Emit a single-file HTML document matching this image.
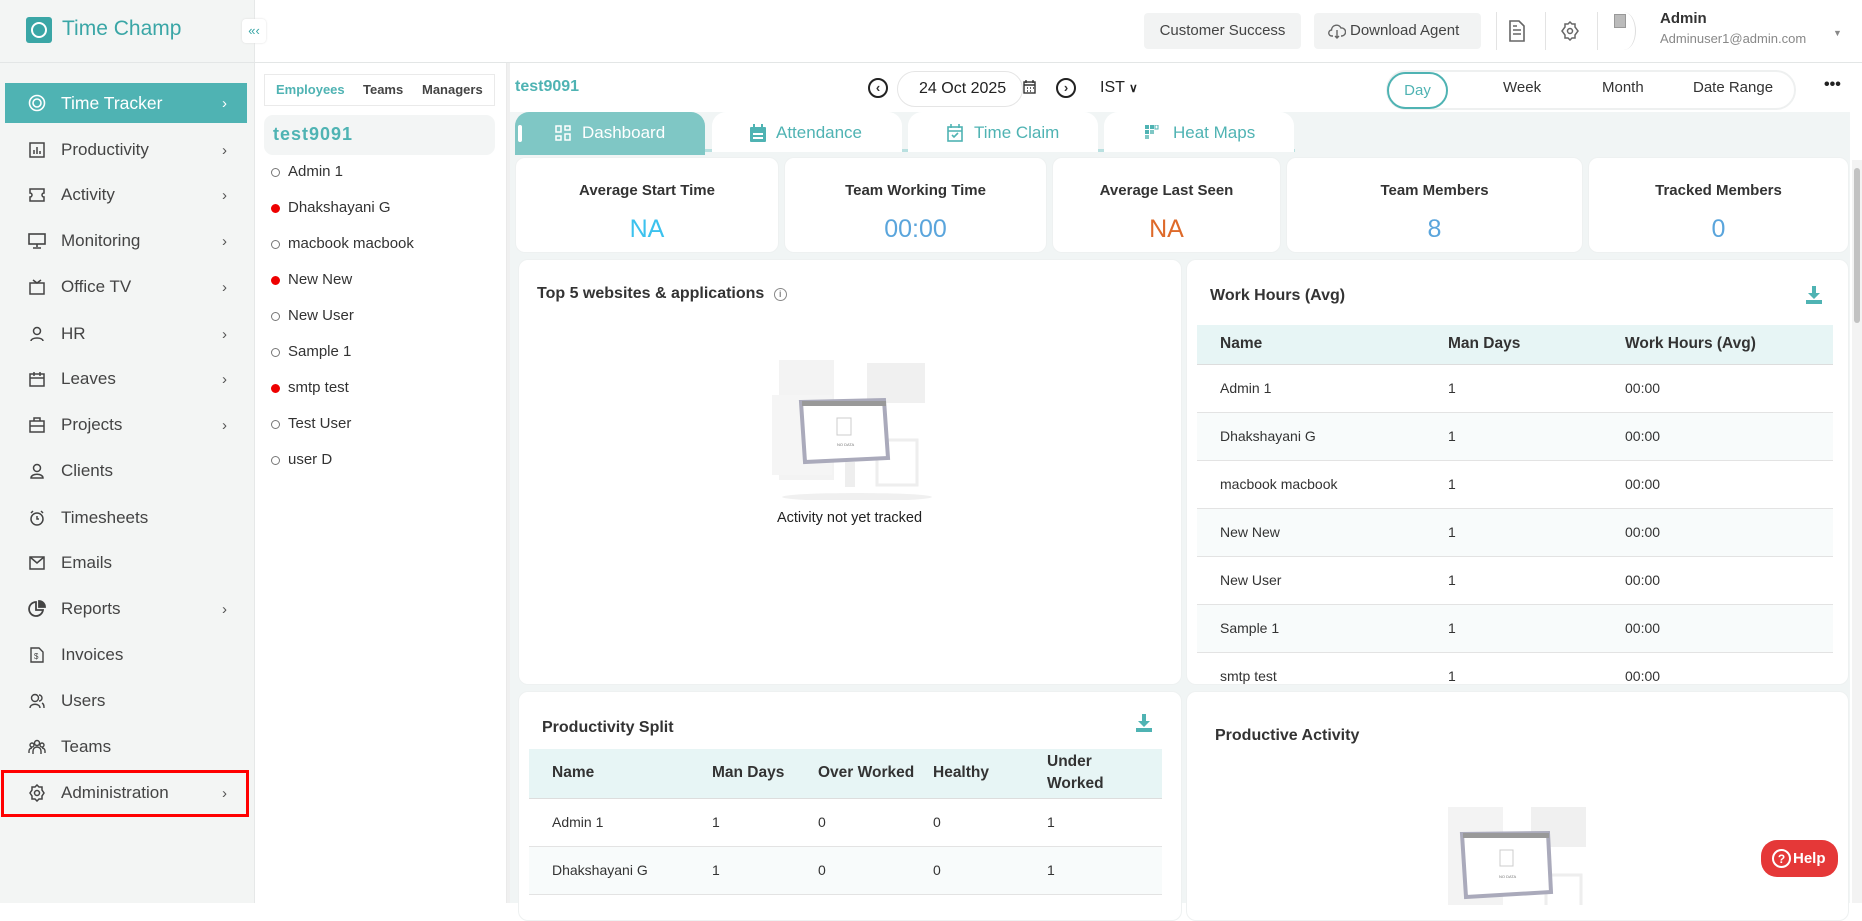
<!DOCTYPE html>
<html><head><meta charset="utf-8"><style>
*{box-sizing:border-box;margin:0;padding:0}
body{width:1862px;height:903px;overflow:hidden;font-family:"Liberation Sans",sans-serif;color:#333;background:#fff;position:relative}
.a{position:absolute}
.side{left:0;top:0;width:255px;height:903px;background:#f3f5f4;border-right:1px solid #e6e8e8}
.mi{position:absolute;left:5px;width:242px;height:46px;display:flex;align-items:center;font-size:17px;color:#444}
.mi .ic{width:20px;height:20px;margin-left:22px;margin-right:14px;display:flex;align-items:center;justify-content:center}
.mi .ch{position:absolute;right:20px;font-size:15px;color:#555}
.emp{font-size:15px;color:#333;left:288px}
.dot{position:absolute;width:9px;height:9px;border-radius:50%;left:-17px;top:5px;border:1px solid #777}
.dot.r{background:#e00;border-color:#e00}
.card{background:#fff;border-radius:10px;border:1px solid #eef1f1}
.st{text-align:center}
.st .t{font-size:15px;font-weight:bold;color:#333;margin-top:24px}
.st .v{font-size:25px;margin-top:16px}
table{border-collapse:collapse}
td,th{text-align:left;font-size:14px;color:#333}
th{font-size:15.5px;font-weight:bold}
</style></head><body>

<!-- sidebar -->
<div class="a side"></div>
<div class="a" style="left:26px;top:17px;width:26px;height:26px;background:#3aa6a6;border-radius:3px"><div style="position:absolute;left:5px;top:5px;width:16px;height:16px;border:2px solid #fff;border-radius:50%"></div></div>
<div class="a" style="left:62px;top:17px;font-size:21px;color:#3aa6a6">Time Champ</div>
<div class="a" style="left:242px;top:19px;width:24px;height:24px;background:#fff;border-radius:4px;color:#3aa6a6;font-size:13px;text-align:center;line-height:24px;box-shadow:0 0 2px #ddd">«‹</div>
<div class="a" style="left:0;top:62px;width:1862px;height:1px;background:#e3e6e6"></div>

<div class="mi" style="top:83px;height:40px;background:#4fb3b3;color:#fff;font-size:17.5px"><div class="ic"><svg width="18" height="18" viewBox="0 0 18 18" fill="none" stroke="#fff" stroke-width="1.6"><circle cx="9" cy="9" r="7.5"/><circle cx="9" cy="9" r="4"/></svg></div>Time Tracker<span class="ch" style="color:#fff">›</span></div>
<div class="mi" style="top:127px"><div class="ic"><svg width="16" height="16" fill="none" stroke="#444" stroke-width="1.5"><rect x="1" y="1" width="14" height="14"/><path d="M5 12V8M8 12V5M11 12V9"/></svg></div>Productivity<span class="ch">›</span></div>
<div class="mi" style="top:172px"><div class="ic"><svg width="16" height="16" fill="none" stroke="#444" stroke-width="1.5"><path d="M1 2h14v4a2 2 0 000 4v4H1v-4a2 2 0 000-4z"/></svg></div>Activity<span class="ch">›</span></div>
<div class="mi" style="top:218px"><div class="ic"><svg width="18" height="16" fill="none" stroke="#444" stroke-width="1.6"><rect x="1" y="1" width="16" height="10"/><path d="M9 11v3M5 15h8"/></svg></div>Monitoring<span class="ch">›</span></div>
<div class="mi" style="top:264px"><div class="ic"><svg width="16" height="16" fill="none" stroke="#444" stroke-width="1.5"><rect x="1" y="4" width="14" height="11"/><path d="M4 1l4 3 4-3"/></svg></div>Office TV<span class="ch">›</span></div>
<div class="mi" style="top:311px"><div class="ic"><svg width="16" height="16" fill="none" stroke="#444" stroke-width="1.5"><circle cx="8" cy="5" r="3.5"/><path d="M2 15c0-4 12-4 12 0"/></svg></div>HR<span class="ch">›</span></div>
<div class="mi" style="top:356px"><div class="ic"><svg width="16" height="16" fill="none" stroke="#444" stroke-width="1.5"><rect x="1" y="3" width="14" height="12"/><path d="M1 7h14M5 1v4M11 1v4"/></svg></div>Leaves<span class="ch">›</span></div>
<div class="mi" style="top:402px"><div class="ic"><svg width="16" height="16" fill="none" stroke="#444" stroke-width="1.5"><rect x="1" y="4" width="14" height="11"/><path d="M5 4V1h6v3M1 9h14"/></svg></div>Projects<span class="ch">›</span></div>
<div class="mi" style="top:448px"><div class="ic"><svg width="14" height="16" fill="none" stroke="#444" stroke-width="1.5"><circle cx="7" cy="5" r="3.5"/><path d="M1 15c0-5 12-5 12 0z"/></svg></div>Clients</div>
<div class="mi" style="top:495px"><div class="ic"><svg width="16" height="16" fill="none" stroke="#444" stroke-width="1.5"><circle cx="8" cy="9" r="6"/><path d="M8 6v3h2M2 3l2-2M14 3l-2-2"/></svg></div>Timesheets</div>
<div class="mi" style="top:540px"><div class="ic"><svg width="16" height="14" fill="none" stroke="#444" stroke-width="1.5"><rect x="1" y="1" width="14" height="12"/><path d="M1 1l7 6 7-6"/></svg></div>Emails</div>
<div class="mi" style="top:586px"><div class="ic"><svg width="18" height="18" fill="none" stroke="#444" stroke-width="1.8"><path d="M8 2a7 7 0 107 8H8z"/><path d="M11 1v6h6a6 6 0 00-6-6z" fill="#444"/></svg></div>Reports<span class="ch">›</span></div>
<div class="mi" style="top:632px"><div class="ic"><svg width="14" height="16" fill="none" stroke="#444" stroke-width="1.4"><path d="M1 1h8l4 4v10H1z"/><text x="4" y="12" font-size="8" fill="#444" stroke="none">$</text></svg></div>Invoices</div>
<div class="mi" style="top:678px"><div class="ic"><svg width="16" height="16" fill="none" stroke="#444" stroke-width="1.4"><circle cx="6" cy="5" r="3.5"/><path d="M1 15c0-5 10-5 10 0M10 2a3 3 0 010 6M13 10c2 1 2 3 2 5"/></svg></div>Users</div>
<div class="mi" style="top:724px"><div class="ic"><svg width="18" height="16" fill="none" stroke="#444" stroke-width="1.4"><circle cx="9" cy="4" r="2.5"/><circle cx="4" cy="6" r="2"/><circle cx="14" cy="6" r="2"/><path d="M5 15v-3a4 4 0 018 0v3M1 14v-2a3 3 0 013-3M17 14v-2a3 3 0 00-3-3"/></svg></div>Teams</div>
<div class="mi" style="top:770px"><div class="ic"><svg width="18" height="18" fill="none" stroke="#444" stroke-width="1.5"><path d="M9 1l2 2h3v3l2 3-2 3v3h-3l-2 2-2-2H4v-3L2 9l2-3V3h3z"/><circle cx="9" cy="9" r="2.5"/></svg></div>Administration<span class="ch">›</span></div>
<div class="a" style="left:1px;top:770px;width:248px;height:47px;border:3px solid #f00"></div>

<!-- header -->
<div class="a" style="left:1144px;top:13px;width:157px;height:36px;background:#f2f3f3;border-radius:4px;font-size:15px;line-height:36px;text-align:center;color:#444">Customer Success</div>
<div class="a" style="left:1314px;top:13px;width:167px;height:36px;background:#f2f3f3;border-radius:4px;font-size:15px;line-height:36px;color:#444;padding-left:36px">Download Agent</div>
<svg class="a" style="left:1328px;top:22px" width="18" height="18" fill="none" stroke="#666" stroke-width="1.4"><path d="M5 14H4a3 3 0 01-.5-6A5 5 0 0113 6a3 3 0 011 8h-1M9 8v8M7 14l2 2 2-2"/></svg>
<div class="a" style="left:1496px;top:12px;width:1px;height:38px;background:#e3e3e3"></div>
<svg class="a" style="left:1509px;top:20px" width="16" height="22" fill="none" stroke="#666" stroke-width="1.6"><path d="M1 1h9l5 5v15H1z M4 10h8M4 14h8M4 6h4"/></svg>
<div class="a" style="left:1545px;top:12px;width:1px;height:38px;background:#e3e3e3"></div>
<svg class="a" style="left:1560px;top:21px" width="20" height="20" fill="none" stroke="#666" stroke-width="1.5"><path d="M10 1l2 2h3v3l3 4-3 4v3h-3l-2 2-2-2H5v-3l-3-4 3-4V3h3z"/><circle cx="10" cy="10" r="2.5"/></svg>
<div class="a" style="left:1597px;top:12px;width:1px;height:38px;background:#e3e3e3"></div>
<div class="a" style="left:1612px;top:12px;width:24px;height:38px;border-radius:50%;border-right:1px solid #ddd"></div>
<div class="a" style="left:1614px;top:14px;width:12px;height:14px;background:#bbb;border:1px solid #999"></div>
<div class="a" style="left:1660px;top:10px;font-size:15px;font-weight:bold;color:#333">Admin</div>
<div class="a" style="left:1660px;top:31px;font-size:13px;color:#888">Adminuser1@admin.com</div>
<div class="a" style="left:1833px;top:28px;font-size:9px;color:#888">▼</div>

<!-- employee panel -->
<div class="a" style="left:255px;top:63px;width:252px;height:840px;background:#fff;border-right:1px solid #eaeaea"></div>
<div class="a" style="left:264px;top:74px;width:231px;height:32px;border:1px solid #eaeaea;font-size:13px;font-weight:bold;line-height:30px">
<span class="a" style="left:11px;color:#4fb3b3">Employees</span><span class="a" style="left:98px;color:#444">Teams</span><span class="a" style="left:157px;color:#444">Managers</span></div>
<div class="a" style="left:264px;top:115px;width:231px;height:40px;background:#f3f5f5;border-radius:9px;font-size:18px;font-weight:bold;color:#4fb3b3;letter-spacing:1px;padding:9px 0 0 9px">test9091</div>
<div class="a emp" style="top:163px"><span class="dot"></span>Admin 1</div>
<div class="a emp" style="top:199px"><span class="dot r"></span>Dhakshayani G</div>
<div class="a emp" style="top:235px"><span class="dot"></span>macbook macbook</div>
<div class="a emp" style="top:271px"><span class="dot r"></span>New New</div>
<div class="a emp" style="top:307px"><span class="dot"></span>New User</div>
<div class="a emp" style="top:343px"><span class="dot"></span>Sample 1</div>
<div class="a emp" style="top:379px"><span class="dot r"></span>smtp test</div>
<div class="a emp" style="top:415px"><span class="dot"></span>Test User</div>
<div class="a emp" style="top:451px"><span class="dot"></span>user D</div>

<!-- main top bar -->
<div class="a" style="left:515px;top:78px;font-size:16px;font-weight:bold;color:#4fb3b3">test9091</div>
<div class="a" style="left:868px;top:78px;width:20px;height:20px;border:2px solid #222;border-radius:50%;font-size:13px;line-height:15px;text-align:center;font-weight:bold">‹</div>
<div class="a" style="left:897px;top:71px;width:126px;height:36px;border:1px solid #e5e5e5;border-radius:18px;font-size:16px;line-height:34px;padding-left:21px;color:#222">24 Oct 2025</div>
<svg class="a" style="left:1023px;top:80px" width="13" height="14" fill="none" stroke="#333" stroke-width="1.4"><rect x="1" y="2" width="11" height="11"/><path d="M1 5h11M4 8h1M7 8h1M10 8h1M4 11h1M7 11h1M3 0v3M10 0v3"/></svg>
<div class="a" style="left:1056px;top:78px;width:20px;height:20px;border:2px solid #222;border-radius:50%;font-size:13px;line-height:15px;text-align:center;font-weight:bold">›</div>
<div class="a" style="left:1100px;top:79px;font-size:16px;color:#222">IST <b style="font-size:12px">∨</b></div>
<div class="a" style="left:1386px;top:70px;width:410px;height:40px;border:2px solid #eef0f0;border-radius:20px"></div>
<div class="a" style="left:1387px;top:72px;height:37px;border:2px solid #4fb3b3;border-radius:19px;width:61px"></div>
<div class="a" style="left:1387px;top:72px;height:37px;font-size:15px;color:#4fb3b3;line-height:37px;text-align:center;width:61px">Day</div>
<div class="a" style="left:1503px;top:79px;font-size:15px;color:#333">Week</div>
<div class="a" style="left:1602px;top:79px;font-size:15px;color:#333">Month</div>
<div class="a" style="left:1693px;top:79px;font-size:15px;color:#333">Date Range</div>
<div class="a" style="left:1824px;top:76px;font-size:16px;font-weight:bold;color:#222">•••</div>

<!-- content bg -->
<div class="a" style="left:510px;top:112px;width:1340px;height:791px;background:#f1f5f5"></div>
<div class="a" style="left:1852px;top:160px;width:10px;height:743px;background:#f3f3f3"></div>
<div class="a" style="left:1854px;top:168px;width:6px;height:155px;background:#c2c2c2;border-radius:3px"></div>

<!-- tabs -->
<div class="a" style="left:515px;top:112px;width:780px;height:40px;border-bottom:3px solid #b9e0e0"></div>
<div class="a" style="left:515px;top:112px;width:190px;height:43px;background:#7fc7c5;border-radius:14px 14px 0 0;color:#fff;font-size:17px;line-height:42px;padding-left:67px">Dashboard</div>
<div class="a" style="left:518px;top:125px;width:4px;height:17px;background:#fff;border-radius:2px"></div>
<svg class="a" style="left:555px;top:125px" width="16" height="17" fill="none" stroke="#fff" stroke-width="1.5"><rect x="1" y="1" width="5" height="6"/><rect x="10" y="1" width="5" height="4"/><rect x="1" y="11" width="5" height="4"/><rect x="10" y="9" width="5" height="6"/></svg>
<div class="a" style="left:712px;top:112px;width:190px;height:40px;background:#fff;border-radius:14px 14px 0 0;color:#4fb3b3;font-size:17px;line-height:42px;padding-left:64px">Attendance</div>
<svg class="a" style="left:750px;top:124px" width="16" height="18" fill="#4fb3b3"><rect x="0" y="3" width="16" height="15" rx="1"/><rect x="3" y="0" width="2" height="4"/><rect x="11" y="0" width="2" height="4"/><rect x="3" y="9" width="10" height="2" fill="#fff"/><rect x="3" y="13" width="10" height="2" fill="#fff"/></svg>
<div class="a" style="left:908px;top:112px;width:190px;height:40px;background:#fff;border-radius:14px 14px 0 0;color:#4fb3b3;font-size:17px;line-height:42px;padding-left:66px">Time Claim</div>
<svg class="a" style="left:947px;top:124px" width="16" height="18" fill="none" stroke="#4fb3b3" stroke-width="1.6"><rect x="1" y="3" width="14" height="14"/><path d="M1 7h14M4 0v4M12 0v4M5 11l2 2 4-4"/></svg>
<div class="a" style="left:1104px;top:112px;width:190px;height:40px;background:#fff;border-radius:14px 14px 0 0;color:#4fb3b3;font-size:17px;line-height:42px;padding-left:69px">Heat Maps</div>
<svg class="a" style="left:1145px;top:125px" width="14" height="17"><rect x="0" y="0" width="4" height="4" fill="#4fb3b3"/><rect x="5" y="0" width="4" height="4" fill="#4fb3b3"/><rect x="10" y="0" width="3" height="4" fill="none" stroke="#4fb3b3"/><rect x="0" y="5" width="4" height="4" fill="#4fb3b3"/><rect x="5" y="5" width="4" height="4" fill="#7fc7c5"/><rect x="0" y="10" width="4" height="4" fill="#7fc7c5"/></svg>

<!-- stat cards -->
<div class="a card st" style="left:515px;top:157px;width:264px;height:96px"><div class="t">Average Start Time</div><div class="v" style="color:#3cc2ee">NA</div></div>
<div class="a card st" style="left:784px;top:157px;width:263px;height:96px"><div class="t">Team Working Time</div><div class="v" style="color:#5aa5dc">00:00</div></div>
<div class="a card st" style="left:1052px;top:157px;width:229px;height:96px"><div class="t">Average Last Seen</div><div class="v" style="color:#de6a2a">NA</div></div>
<div class="a card st" style="left:1286px;top:157px;width:297px;height:96px"><div class="t">Team Members</div><div class="v" style="color:#5aa5dc">8</div></div>
<div class="a card st" style="left:1588px;top:157px;width:261px;height:96px"><div class="t">Tracked Members</div><div class="v" style="color:#5aa5dc">0</div></div>

<!-- top5 -->
<div class="a card" style="left:518px;top:259px;width:664px;height:426px"></div>
<div class="a" style="left:537px;top:285px;font-size:16px;font-weight:bold;color:#333">Top 5 websites &amp; applications <span style="display:inline-block;width:13px;height:13px;border:1px solid #888;border-radius:50%;font-size:9px;color:#888;text-align:center;line-height:11px;vertical-align:1px;margin-left:5px">i</span></div>
<svg class="a" style="left:767px;top:350px" width="180" height="150">
<rect x="12" y="10" width="55" height="120" fill="#f3f3f3"/><rect x="100" y="13" width="58" height="40" fill="#f0f0f0"/><rect x="110" y="90" width="40" height="45" fill="none" stroke="#eee" stroke-width="3"/><rect x="5" y="45" width="60" height="80" fill="#f5f5f5"/>
<path d="M34 52 L117 50 L121 108 L38 112 Z" fill="#fff" stroke="#aab" stroke-width="4"/><rect x="35" y="51" width="84" height="5" fill="#999"/>
<rect x="70" y="68" width="14" height="17" fill="none" stroke="#ccc"/><text x="70" y="96" font-size="4" fill="#777">NO DATA</text>
<rect x="78" y="112" width="10" height="25" fill="#eee"/><ellipse cx="90" cy="147" rx="75" ry="4" fill="#f0f0f0"/></svg>
<div class="a" style="left:767px;top:510px;width:165px;text-align:center;font-size:14.5px;color:#222">Activity not yet tracked</div>

<!-- work hours -->
<div class="a card" style="left:1186px;top:259px;width:663px;height:426px;overflow:hidden">
<div class="a" style="left:23px;top:27px;font-size:16px;font-weight:bold;color:#333">Work Hours (Avg)</div>
<svg class="a" style="left:619px;top:26px" width="16" height="18" fill="#4fb3b3"><path d="M6 0h4v7h4l-6 6-6-6h4z"/><rect x="0" y="14" width="16" height="4"/></svg>
<table class="a" style="left:10px;top:65px;width:636px">
<tr style="background:#e7f5f5;height:39px;border-bottom:1px solid #ddd"><th style="padding-left:23px;width:251px">Name</th><th style="width:177px">Man Days</th><th>Work Hours (Avg)</th></tr>
<tr style="height:48px;border-bottom:1px solid #e3e3e3"><td style="padding-left:23px">Admin 1</td><td>1</td><td>00:00</td></tr>
<tr style="height:48px;border-bottom:1px solid #e3e3e3;background:#f8fbfb"><td style="padding-left:23px">Dhakshayani G</td><td>1</td><td>00:00</td></tr>
<tr style="height:48px;border-bottom:1px solid #e3e3e3"><td style="padding-left:23px">macbook macbook</td><td>1</td><td>00:00</td></tr>
<tr style="height:48px;border-bottom:1px solid #e3e3e3;background:#f8fbfb"><td style="padding-left:23px">New New</td><td>1</td><td>00:00</td></tr>
<tr style="height:48px;border-bottom:1px solid #e3e3e3"><td style="padding-left:23px">New User</td><td>1</td><td>00:00</td></tr>
<tr style="height:48px;border-bottom:1px solid #e3e3e3;background:#f8fbfb"><td style="padding-left:23px">Sample 1</td><td>1</td><td>00:00</td></tr>
<tr style="height:48px"><td style="padding-left:23px">smtp test</td><td>1</td><td>00:00</td></tr>
</table></div>

<!-- productivity split -->
<div class="a card" style="left:518px;top:691px;width:664px;height:230px;overflow:hidden">
<div class="a" style="left:23px;top:27px;font-size:16px;font-weight:bold;color:#333">Productivity Split</div>
<svg class="a" style="left:617px;top:22px" width="16" height="18" fill="#4fb3b3"><path d="M6 0h4v7h4l-6 6-6-6h4z"/><rect x="0" y="14" width="16" height="4"/></svg>
<table class="a" style="left:10px;top:57px;width:633px">
<tr style="background:#e7f5f5;height:49px;border-bottom:1px solid #ddd"><th style="padding-left:23px;width:183px">Name</th><th style="width:106px">Man Days</th><th style="width:115px">Over Worked</th><th style="width:114px">Healthy</th><th style="line-height:22px">Under<br>Worked</th></tr>
<tr style="height:48px;border-bottom:1px solid #e3e3e3"><td style="padding-left:23px">Admin 1</td><td>1</td><td>0</td><td>0</td><td>1</td></tr>
<tr style="height:48px;border-bottom:1px solid #e3e3e3;background:#f8fbfb"><td style="padding-left:23px">Dhakshayani G</td><td>1</td><td>0</td><td>0</td><td>1</td></tr>
</table></div>

<!-- productive activity -->
<div class="a card" style="left:1186px;top:691px;width:663px;height:230px"></div>
<div class="a" style="left:1215px;top:727px;font-size:16px;font-weight:bold;color:#333">Productive Activity</div>
<svg class="a" style="left:1436px;top:795px" width="170" height="110">
<rect x="12" y="12" width="55" height="100" fill="#f3f3f3"/><rect x="95" y="12" width="55" height="40" fill="#f0f0f0"/><rect x="110" y="80" width="35" height="40" fill="none" stroke="#eee" stroke-width="3"/>
<path d="M26 39 L112 38 L115 97 L30 102 Z" fill="#fff" stroke="#aab" stroke-width="4"/><rect x="27" y="38" width="86" height="5" fill="#999"/>
<rect x="64" y="55" width="13" height="16" fill="none" stroke="#ccc"/><text x="63" y="83" font-size="4" fill="#777">NO DATA</text></svg>

<!-- help -->
<div class="a" style="left:1761px;top:840px;width:77px;height:37px;background:#e53838;border-radius:16px;color:#fff;font-size:15px;font-weight:bold;line-height:37px;padding-left:32px">Help</div>
<div class="a" style="left:1772px;top:849px;width:19px;height:19px;border:2px solid #fff;border-radius:50%;color:#fff;font-size:12px;font-weight:bold;text-align:center;line-height:16px">?</div>
<div class="a" style="left:507px;top:63px;width:3px;height:840px;background:#f0f0f0"></div>
</body></html>
